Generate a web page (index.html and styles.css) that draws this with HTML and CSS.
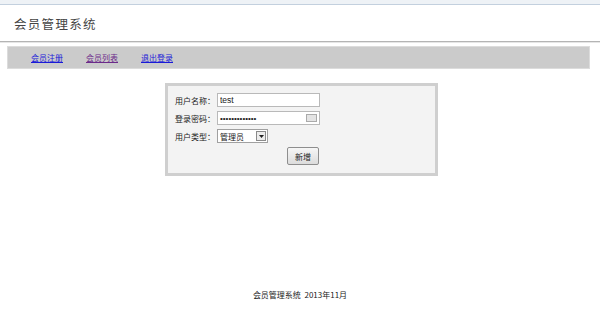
FILE: index.html
```html
<!DOCTYPE html>
<html lang="zh-CN">
<head>
    <meta charset="UTF-8">
    <title>会员管理系统</title>
    <link rel="stylesheet" href="styles.css">
</head>
<body>

    <div class="chrome"></div>

    <div class="header">
        <h1 class="title">会员管理系统</h1>
    </div>
    <div class="divider"></div>

    <div class="nav">
        <a href="#">会员注册</a>
        <a href="#" class="visited">会员列表</a>
        <a href="#">退出登录</a>
    </div>

    <div class="content">
        <form class="box">
            <div class="row">
                <label>用户名称：</label>
                <input type="text" class="field" value="test">
            </div>
            <div class="row">
                <label>登录密码：</label>
                <div class="field pwd">
                    <span class="dots">•••••••••••••</span>
                    <span class="kbd"></span>
                </div>
            </div>
            <div class="row">
                <label>用户类型：</label>
                <div class="select">
                    <span class="select-text">管理员</span>
                    <span class="select-btn">
                        <svg width="5" height="3" viewBox="0 0 5 3"><path d="M0 0h5L2.5 3z" fill="#222"/></svg>
                    </span>
                </div>
            </div>
            <div class="row row-btn">
                <button type="button" class="btn">新增</button>
            </div>
        </form>
    </div>

    <div class="footer">会员管理系统&nbsp;&nbsp;2013年11月</div>

</body>
</html>
```
FILE: styles.css
```css
body {
    margin: 0;
    font-family: "Noto Sans CJK SC", "Liberation Sans", sans-serif;
    font-size: 8px;
    color: #222;
    background: #fff;
}

.chrome {
    height: 4px;
    background: #eef2f6;
    border-bottom: 1px solid #c3d0de;
}

.header {
    height: 36px;
    display: flex;
    align-items: center;
    padding-left: 14px;
}

.title {
    margin: 0;
    font-size: 12.5px;
    font-weight: normal;
    letter-spacing: 1.3px;
    color: #444;
}

.divider {
    border-top: 1px solid #b4b4b4;
    border-bottom: 1px solid #e6e6e6;
}

.nav {
    margin: 3px 10px 0 7px;
    height: 21px;
    background: #cbcbcb;
    border: 1px solid #dcdcdc;
    display: flex;
    align-items: center;
    padding-left: 23px;
    gap: 23px;
}

.nav a {
    color: #1a1ad8;
    font-size: 8px;
}

.nav a.visited {
    color: #6b2a8a;
}

.content {
    padding-top: 14px;
    display: flex;
    justify-content: center;
}

.box {
    width: 260px;
    margin-left: 3px;
    border: 3px solid #cfcfcf;
    background: #f3f3f3;
    padding: 7px 0 8px 7px;
    display: flex;
    flex-direction: column;
    gap: 4px;
}

.row {
    display: flex;
    align-items: center;
    height: 14px;
}

.row label {
    width: 42px;
    font-size: 8px;
    white-space: nowrap;
}

.field {
    box-sizing: border-box;
    width: 103px;
    height: 14px;
    margin: 0;
    padding: 0 2px;
    border: 1px solid #b9b9b9;
    background: #fff;
    font-family: "Liberation Sans", sans-serif;
    font-size: 8.5px;
    color: #222;
    outline: none;
}

.pwd {
    display: flex;
    align-items: center;
    justify-content: space-between;
}

.dots {
    font-family: "Liberation Sans", sans-serif;
    font-size: 8px;
    color: #222;
}

.kbd {
    width: 9px;
    height: 6px;
    border: 1px solid #aaa;
    background: #e4e4e4;
}

.select {
    box-sizing: border-box;
    width: 51px;
    height: 14px;
    border: 1px solid #a0a0a0;
    background: #fff;
    display: flex;
    align-items: center;
    justify-content: space-between;
    padding: 0 1px 0 2px;
}

.select-text {
    font-size: 8px;
}

.select-btn {
    box-sizing: border-box;
    width: 10px;
    height: 10px;
    border: 1px solid #8a8a8a;
    background: #ececec;
    display: flex;
    align-items: center;
    justify-content: center;
}

.row-btn {
    height: 18px;
    padding-left: 112px;
}

.btn {
    box-sizing: border-box;
    width: 32px;
    height: 18px;
    padding: 0;
    border: 1px solid #8e8e8e;
    border-radius: 2px;
    background: linear-gradient(#f6f6f6, #dcdcdc);
    font-family: "Noto Sans CJK SC", sans-serif;
    font-size: 8px;
    color: #222;
}

.footer {
    margin-top: 113px;
    text-align: center;
    font-size: 8px;
    color: #222;
}
```
